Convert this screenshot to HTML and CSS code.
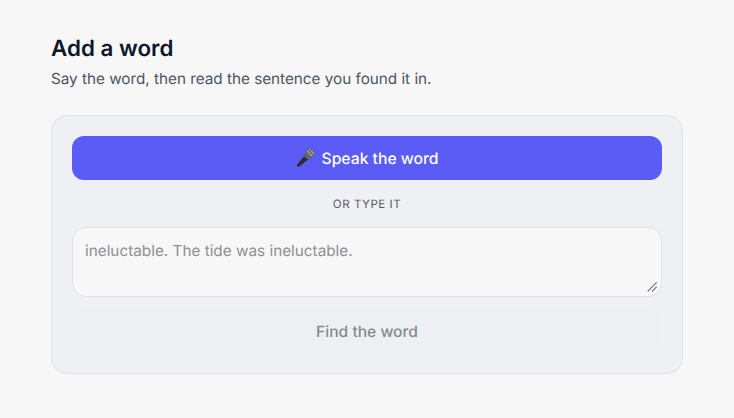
FILE: index.html
```html
<!DOCTYPE html>
<html lang="en">
<head>
<meta charset="utf-8">
<title>Add a word</title>
<link rel="stylesheet" href="styles.css">
</head>
<body>
<main class="page">
  <h1 class="title">Add a word</h1>
  <p class="subtitle">Say the word, then read the sentence you found it in.</p>
  <section class="card">
    <button class="speak" type="button">
      <svg class="mic" viewBox="0 0 20 20" width="20" height="20" aria-hidden="true">
        <path d="M9.4 6.6 1.2 16.4c-.5.7-.5 1.4.1 2 .6.6 1.3.6 2 .1l9.9-8.1z" fill="#2a2c31"/>
        <path d="M9 7.1 8 8.3l3.9 3.2 1.3-1.1z" fill="#6f7379"/>
        <circle cx="13.8" cy="5.4" r="4.8" fill="#5c6066"/>
        <path d="M10.6 4.6 14.6 1M11.6 7 16.8 2.6M13.6 8.6 18.2 4.6M11 2.8 16.6 8.6M13.4 1.2 18.6 6.4" stroke="#b9bdc2" stroke-width=".8" fill="none"/>
      </svg>
      <span>Speak the word</span>
    </button>
    <div class="divider">OR TYPE IT</div>
    <div class="field">
      <textarea class="sentence" placeholder="ineluctable. The tide was ineluctable."></textarea>
      <svg class="grip" viewBox="0 0 12 12" width="12" height="12" aria-hidden="true">
        <path d="M1.7 10.3 10.7 1.3M6 10.7 10.7 5.7" stroke="#6f6f6f" stroke-width="1.1" fill="none"/>
      </svg>
    </div>
    <button class="find" type="button">Find the word</button>
  </section>
</main>
</body>
</html>
```
FILE: styles.css
```css
* { box-sizing: border-box; }
html, body { margin: 0; height: 100%; }
body {
  background: #f7f7f8;
  font-family: Inter, "Liberation Sans", sans-serif;
  text-rendering: geometricPrecision;
  overflow: hidden;
}
.page { width: 632px; margin-left: 51px; padding-top: 35px; }
.title {
  margin: 0;
  font-size: 22.4px;
  line-height: 28px;
  font-weight: 600;
  color: #0f172a;
}
.subtitle {
  margin: 6px 0 0;
  font-size: 15.25px;
  line-height: 20px;
  color: #4b5563;
}
.card {
  margin-top: 26px;
  height: 259px;
  padding: 20px;
  background: #eef0f4;
  border: 1px solid #dfe2e8;
  border-radius: 16px;
  display: flex;
  flex-direction: column;
}
.speak {
  height: 44px;
  border: 0;
  border-radius: 12px;
  background: #5b5bf6;
  color: #fff;
  font: 450 15.7px Inter, "Liberation Sans", sans-serif;
  text-rendering: geometricPrecision;
  display: flex;
  align-items: center;
  justify-content: center;
  gap: 6px;
}
.mic { display: block; }
.divider {
  margin-top: 16px;
  font-size: 11.5px;
  line-height: 16px;
  letter-spacing: 0.55px;
  text-align: center;
  color: #555b66;
}
.field { position: relative; margin-top: 15px; }
.sentence {
  display: block;
  height: 70px;
  width: 100%;
  padding: 12px;
  border: 1px solid #dfe2e8;
  border-radius: 14px;
  background: #f7f7f8;
  font: 15.3px/22px Inter, "Liberation Sans", sans-serif;
  text-rendering: geometricPrecision;
  color: #0f172a;
  resize: none;
}
.sentence::placeholder { color: #8e8f92; opacity: 1; }
.grip { position: absolute; right: 4px; bottom: 4px; }
.find {
  margin-top: 12px;
  height: 44px;
  border: 0;
  border-radius: 12px;
  background: #ecf0f3;
  color: #84888e;
  font: 450 15.6px Inter, "Liberation Sans", sans-serif;
  text-rendering: geometricPrecision;
}
```
